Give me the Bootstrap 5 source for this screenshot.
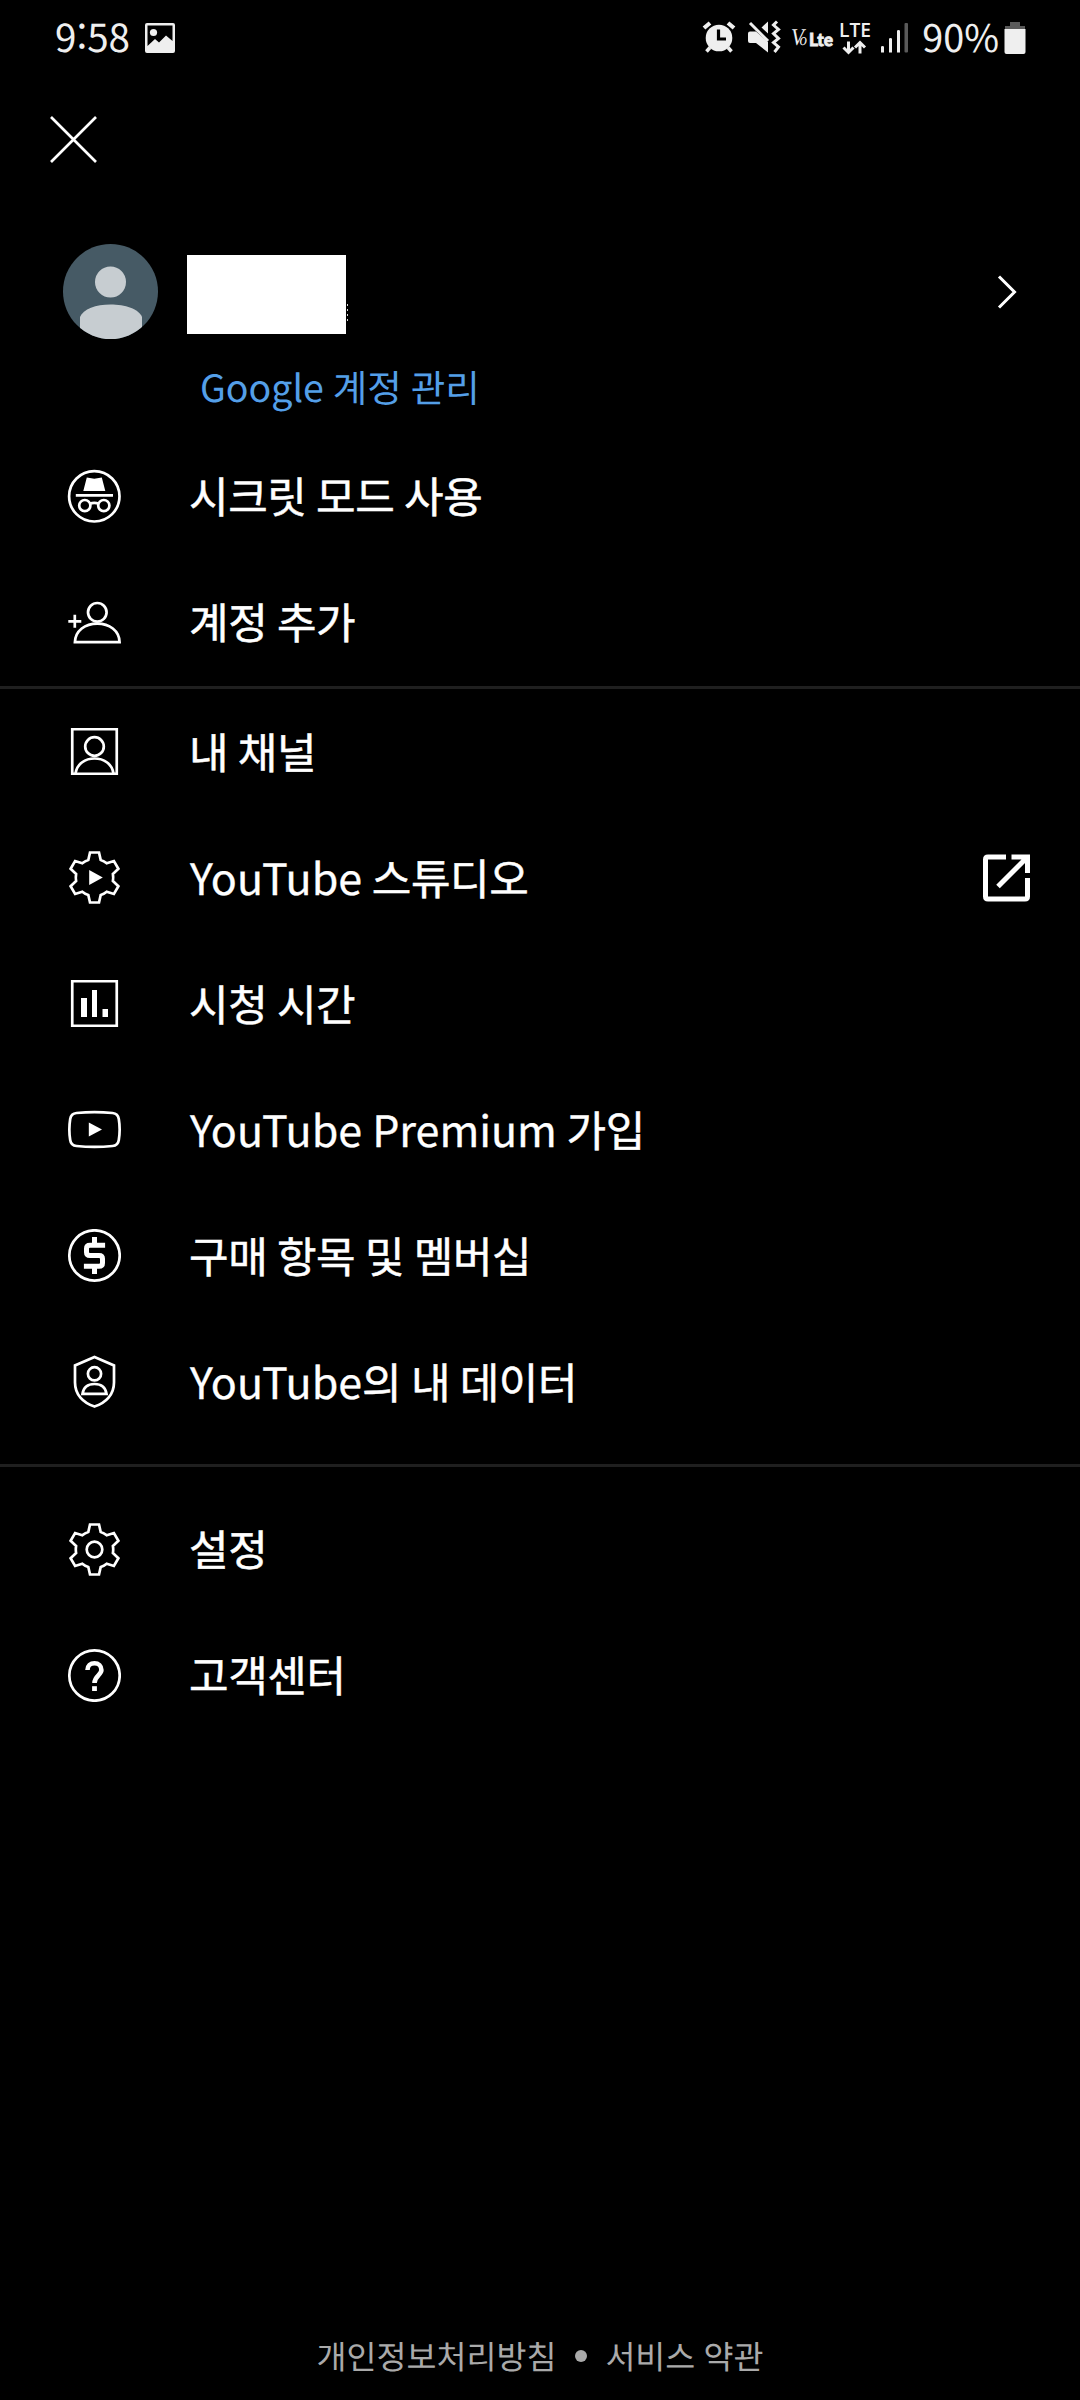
<!DOCTYPE html>
<html lang="ko">
<head>
<meta charset="utf-8">
<meta name="viewport" content="width=device-width, initial-scale=1">
<title>계정</title>
<link rel="stylesheet" href="https://cdn.jsdelivr.net/npm/bootstrap@5.3.0/dist/css/bootstrap.min.css">
<style>
body{background:#000;color:#fff;font-family:"Noto Sans CJK KR",sans-serif;line-height:1.2;text-rendering:geometricPrecision}
svg{display:block;flex:none}
.screen{min-height:2400px}
.statusbar{height:76px;padding:0 54px 0 55px;font-size:38.6px;color:#efefef}
.clock{padding-bottom:4px}
.photo{margin:0 0 1px 14px}
.pct{font-size:37.8px;margin-right:5px;padding-bottom:4px}
.topbar{height:128px;padding:35px 0 0 46px}
.account{height:157px;padding:40px 61px 0 63px}
.account-name{width:159px;height:79px;background:#fff;margin:11px 0 0 29px}
.name-tail{width:1px;height:20px;margin:60px 0 0 1px;background:repeating-linear-gradient(#ddd 0 2px,#000 2px 5px)}
.chev{margin-top:28px}
.manage{height:54px;padding:0 0 5px 200px;font-size:37.5px;word-spacing:-1.5px;color:#549fe8}
.group-a{padding-top:18px}
.group-c{padding-top:19px}
.menu-row{height:126px;padding:0 46px 0 67px;font-size:43px;color:#fff;text-decoration:none}
.menu-row span{margin-left:68px;-webkit-text-stroke:.5px #fff;white-space:nowrap;letter-spacing:-.4px;word-spacing:-2px}
.menu-row .latin{letter-spacing:0;margin-left:1px;-webkit-text-stroke-width:.3px}
.rule{height:3px;background:#1f1f1f;margin-top:1px}
.rule-b{margin-top:19px}
.line{fill:none;stroke:#fff;stroke-width:2.7}
.solid{fill:#fff}
.footer-links{font-size:32.6px;color:#aaa;height:88px;word-spacing:-1px}
.footer-links a{color:inherit;text-decoration:none}
.bullet{width:12px;height:12px;border-radius:50%;background:#aaa;margin:0 18px 0 19px}
.lte-b{font:900 18px Lato,"Open Sans",sans-serif}
.vo{font:italic 24px "Liberation Serif",serif}
.net{font:600 19.5px "Open Sans",sans-serif}
</style>
</head>
<body>
<div class="screen d-flex flex-column">
  <header class="statusbar d-flex align-items-center justify-content-between">
    <div class="d-flex align-items-center">
      <span class="clock">9:58</span>
      <svg class="photo" width="32" height="32" viewBox="0 0 32 32"><path fill="#efefef" fill-rule="evenodd" d="M3 1H29Q31 1 31 3V29Q31 31 29 31H3Q1 31 1 29V3Q1 1 3 1ZM3.500 3.500V24L11 17L15 20.500L22 13.500L28.500 19V3.500Z"/><circle cx="9.500" cy="10.500" r="3.600" fill="#efefef"/></svg>
    </div>
    <div class="d-flex align-items-center">
      <svg width="222" height="44" viewBox="700 15.500 222 44" fill="#efefef" stroke="none">
        <circle cx="719" cy="37.500" r="13.300"/>
        <path d="M718.500 29V38.500H726" fill="none" stroke="#000" stroke-width="3.200"/>
        <path d="M704 27.500L710 22.500M728 22.500L734 27.500" fill="none" stroke="#efefef" stroke-width="4.200"/>
        <path d="M710 47L706.500 51M728 47L731.500 51" fill="none" stroke="#efefef" stroke-width="3.500"/>
        <path d="M750 31H756L768 41.500V52L756 42.500H750Q748 42.500 748 40.500V33Q748 31 750 31ZM761.500 27L768 21V33Z"/>
        <path d="M750 22.500L768 40.500" stroke="#efefef" stroke-width="3" fill="none"/>
        <path d="M777 21L773.500 24.500L778.500 29L773.500 33L778.500 38L773.500 42L778.500 46.500L774.500 51.500" fill="none" stroke="#efefef" stroke-width="3"/>
        <text class="vo" x="791" y="44.500" textLength="16" lengthAdjust="spacingAndGlyphs">V<tspan font-size="17" dx="-5">o</tspan></text>
        <text class="lte-b" x="809" y="45.500" textLength="24" lengthAdjust="spacingAndGlyphs" stroke="#efefef" stroke-width=".8">Lte</text>
        <text class="net" x="839" y="36" textLength="32" lengthAdjust="spacingAndGlyphs">LTE</text>
        <path d="M848.500 41V52M843.500 47L848.500 52L853.500 47M860 53V42M855 47L860 42L865 47" fill="none" stroke="#efefef" stroke-width="3"/>
        <path d="M881 46.500Q881 45.500 882.500 45.500T884 46.500V52H881ZM889 38.500Q889 37.500 890.500 37.500T892 38.500V52H889ZM897 30.500Q897 29.500 898.500 29.500T900 30.500V52H897Z"/>
        <rect x="904.500" y="22.500" width="3.500" height="29.500" rx="1" fill="#5a5a5a"/>
      </svg>
      <span class="pct">90%</span>
      <svg width="22" height="34" viewBox="0 0 22 34"><path fill="#5a5a5a" d="M6 1H16V5H21V8H1V5H6Z"/><path fill="#efefef" d="M.5 8H21.500V31Q21.500 33 19.500 33H2.500Q.5 33 .5 31Z"/></svg>
    </div>
  </header>

  <div class="topbar">
    <svg width="56" height="56" viewBox="46 110 56 56"><path d="M51 116L96 161M96 116L51 161" fill="none" stroke="#fff" stroke-width="2.700"/></svg>
  </div>

  <section class="account d-flex align-items-start">
    <svg width="95" height="95" viewBox="0 0 95 95">
      <clipPath id="c"><circle cx="47.500" cy="47.500" r="47.500"/></clipPath>
      <g clip-path="url(#c)"><rect width="95" height="95" fill="#465a65"/><g fill="#c7cdd1"><circle cx="47.500" cy="38" r="15.500"/><path d="M17 95V73C20 65 33 60.500 47.500 60.500S76 65 79 73V95Z"/></g></g>
    </svg>
    <div class="account-name"></div>
    <div class="name-tail"></div>
    <svg class="ms-auto chev" width="24" height="40" viewBox="995 272 24 40"><path d="M999 276.500L1014.500 292L999 307.500" fill="none" stroke="#fff" stroke-width="3"/></svg>
  </section>
  <a class="manage d-flex align-items-center text-decoration-none" href="#">Google 계정 관리</a>

  <nav class="group-a">
    <a class="menu-row d-flex align-items-center" href="#">
      <svg width="54" height="54" viewBox="-27.3 -27.3 54 54"><circle class="line" r="25.200"/><path class="solid" d="M-7.500 -18.700L0 -17.500L7.500 -18.700L11 -5.300H-11ZM-18.500 -2.300H18.700V.4H-18.500Z"/><g class="line"><circle cx="-9.500" cy="9.300" r="5.600"/><circle cx="9.500" cy="9.300" r="5.600"/><path d="M-4.500 7.500Q0 5.500 4.500 7.500"/></g></svg>
      <span>시크릿 모드 사용</span></a>
    <a class="menu-row d-flex align-items-center" href="#">
      <svg width="54" height="54" viewBox="-27.3 -27 54 54"><g class="line"><circle cx="3" cy="-9.700" r="9.300"/><path d="M-19.400 20.200C-19 8.500,-9 1.600,3 1.600S25 8.500,25.300 20.200ZM-26 -.7H-13M-19.500 -7.200V5.800"/></g></svg>
      <span>계정 추가</span></a>
  </nav>
  <div class="rule"></div>
  <nav class="group-b">
    <a class="menu-row d-flex align-items-center" href="#">
      <svg width="54" height="54" viewBox="-27.5 -26.5 54 54"><g class="line"><path d="M-22.250 -22.250H22.250V22.250H-22.250Z"/><circle cy="-5" r="9.300"/><path d="M-19 22C-17.500 12,-9 7,0 7S17.500 12,19 22"/></g></svg>
      <span>내 채널</span></a>
    <a class="menu-row d-flex align-items-center" href="#">
      <svg width="54" height="54" viewBox="-27.5 -26.5 54 54"><path class="line" id="gear" d="M-4.500 -25H4.500L6.200 -17.500Q9.500 -16.500 12.200 -14.200L19.400 -16.500L23.900 -8.700L18.400 -3.500Q19 0 18.400 3.500L23.900 8.700L19.400 16.500L12.200 14.200Q9.500 16.500 6.200 17.500L4.500 25H-4.500L-6.200 17.500Q-9.500 16.500 -12.200 14.200L-19.400 16.500L-23.900 8.700L-18.400 3.500Q-19 0 -18.400 -3.500L-23.900 -8.700L-19.400 -16.500L-12.200 -14.200Q-9.500 -16.500 -6.200 -17.500Z"/><path class="solid" d="M-5.300 -7.500V7.500L8.300 0Z"/></svg>
      <span><bdi class="latin">YouTube</bdi> 스튜디오</span>
      <svg class="ms-auto" width="56" height="56" viewBox="978 849.5 56 56"><path d="M1006 856.500H988Q985.500 856.500 985.500 859V896Q985.500 898.500 988 898.500H1025Q1027.500 898.500 1027.500 896V877.500M1011.500 856.500H1027.500V872.500M1027 857L998 886" fill="none" stroke="#fff" stroke-width="5"/></svg></a>
    <a class="menu-row d-flex align-items-center" href="#">
      <svg width="54" height="54" viewBox="-27.5 -26.5 54 54"><path class="line" d="M-22.250 -22.250H22.250V22.250H-22.250Z"/><path class="solid" d="M-13.500 -5.500H-7.500V13.500H-13.500ZM-2.500 -13.500H2.500V13.500H-2.500ZM8 5.500H13.500V13.500H8Z"/></svg>
      <span>시청 시간</span></a>
    <a class="menu-row d-flex align-items-center" href="#">
      <svg width="54" height="54" viewBox="-27.5 -26.5 54 54"><path class="line" d="M-18 -16.500Q0 -18.200 18 -16.500Q23.500 -16 24.300 -10.500Q26 0 24.300 10.500Q23.500 16 18 16.500Q0 18.200 -18 16.500Q-23.500 16 -24.300 10.500Q-26 0 -24.300 -10.500Q-23.500 -16 -18 -16.500Z"/><path class="solid" d="M-5.700 -6.900V6.900L7.500 0Z"/></svg>
      <span><bdi class="latin">YouTube Premium</bdi> 가입</span></a>
    <a class="menu-row d-flex align-items-center" href="#">
      <svg width="54" height="54" viewBox="-27.5 -26.5 54 54"><circle class="line" r="25.200"/><path fill="none" stroke="#fff" stroke-width="5" d="M10.600 -10.300H-4.500Q-8 -10.300 -8 -7V-3.300Q-8 0 -4.500 0H4.500Q8 0 8 3.300V7.500Q8 10.800 4.500 10.800H-10.600M0 -18.600V-10M0 10V18.600"/></svg>
      <span>구매 항목 및 멤버십</span></a>
    <a class="menu-row d-flex align-items-center" href="#">
      <svg width="54" height="54" viewBox="-27.5 -26.5 54 54"><g class="line"><path d="M0 -24.500L19.500 -16V1C19.500 13 11.500 21.500 0 25C-11.500 21.500 -19.500 13 -19.500 1V-16Z"/><circle cy="-7.700" r="6.600"/><path d="M-12 12.300C-11 5.500,-6 2.500,0 2.500S11 5.500,12 12.300Z"/></g></svg>
      <span><bdi class="latin">YouTube</bdi>의 내 데이터</span></a>
  </nav>
  <div class="rule rule-b"></div>
  <nav class="group-c">
    <a class="menu-row d-flex align-items-center" href="#">
      <svg width="54" height="54" viewBox="-27.5 -27.5 54 54"><use href="#gear"/><circle class="line" r="7.800"/></svg>
      <span>설정</span></a>
    <a class="menu-row d-flex align-items-center" href="#">
      <svg width="54" height="54" viewBox="-27.5 -27.5 54 54"><circle class="line" r="25.200"/><path fill="none" stroke="#fff" stroke-width="4.600" d="M-7 -5.500C-7 -10 -4 -12.200 0 -12.200S6.900 -9.500 6.900 -5.500C6.900 -.5 0 .5 0 7.500"/><path class="solid" d="M-2.400 10.700H2.400V15.500H-2.400Z"/></svg>
      <span>고객센터</span></a>
  </nav>

  <footer class="footer-links mt-auto d-flex justify-content-center align-items-center">
    <a href="#">개인정보처리방침</a><div class="bullet"></div><a href="#">서비스 약관</a>
  </footer>
</div>
<script src="https://cdn.jsdelivr.net/npm/bootstrap@5.3.0/dist/js/bootstrap.bundle.min.js"></script>
</body>
</html>
